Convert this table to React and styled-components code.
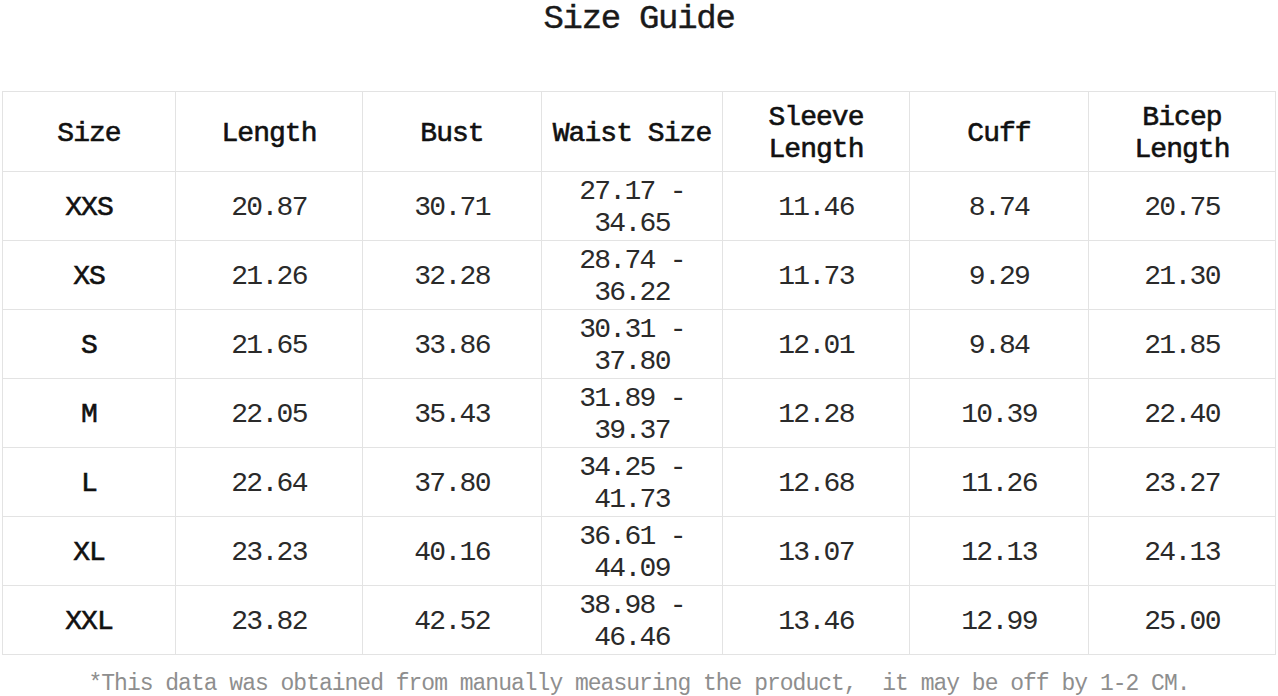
import React from 'react';
import styled, { createGlobalStyle } from 'styled-components';

const GlobalStyle = createGlobalStyle`
  html, body {
    margin: 0;
    padding: 0;
    background: #ffffff;
  }
  body {
    font-family: 'Liberation Mono', 'DejaVu Sans Mono', monospace;
    color: #1c1c1c;
  }
`;

const Page = styled.div`
  width: 1278px;
  height: 696px;
  overflow: hidden;
  display: flex;
  flex-direction: column;
  align-items: flex-start;
`;

const Title = styled.h1`
  align-self: stretch;
  margin: 0 0 55px;
  height: 36px;
  line-height: 38px;
  text-align: center;
  font-size: 34px;
  font-weight: 400;
  letter-spacing: -1.3px;
  color: #1a1a1a;
  -webkit-text-stroke: 0.4px #1a1a1a;
`;

const Grid = styled.div`
  margin-left: 2px;
  display: grid;
  grid-template-columns: 173px 187px 179px 181px 187px 179px 187px;
  grid-template-rows: 80px repeat(7, 69px);
  border-top: 1px solid #e3e3e3;
  border-left: 1px solid #e3e3e3;
`;

const Cell = styled.div`
  box-sizing: border-box;
  display: flex;
  align-items: center;
  justify-content: center;
  padding: 4px 4px 0;
  text-align: center;
  border-right: 1px solid #e3e3e3;
  border-bottom: 1px solid #e3e3e3;
  font-size: 28px;
  line-height: 32px;
  font-weight: 400;
  letter-spacing: ${p => (p.$strong ? '-0.95px' : '-1.7px')};
  color: ${p => (p.$strong ? '#111111' : '#2a2a2a')};
  -webkit-text-stroke: ${p => (p.$strong ? '0.6px #111111' : '0')};
`;

const Note = styled.p`
  align-self: stretch;
  margin: 15px 0 0;
  line-height: 28px;
  text-align: center;
  font-size: 23px;
  letter-spacing: -1px;
  color: #8e8e8e;
  white-space: pre;
`;

const headers = ['Size', 'Length', 'Bust', 'Waist Size', 'Sleeve Length', 'Cuff', 'Bicep Length'];

const rows = [
  ['XXS', '20.87', '30.71', '27.17 - 34.65', '11.46', '8.74', '20.75'],
  ['XS', '21.26', '32.28', '28.74 - 36.22', '11.73', '9.29', '21.30'],
  ['S', '21.65', '33.86', '30.31 - 37.80', '12.01', '9.84', '21.85'],
  ['M', '22.05', '35.43', '31.89 - 39.37', '12.28', '10.39', '22.40'],
  ['L', '22.64', '37.80', '34.25 - 41.73', '12.68', '11.26', '23.27'],
  ['XL', '23.23', '40.16', '36.61 - 44.09', '13.07', '12.13', '24.13'],
  ['XXL', '23.82', '42.52', '38.98 - 46.46', '13.46', '12.99', '25.00'],
];

export default function App() {
  return (
    <Page>
      <GlobalStyle />
      <Title>Size Guide</Title>
      <Grid>
        {headers.map(h => (
          <Cell key={h} $strong>
            {h}
          </Cell>
        ))}
        {rows.map(row =>
          row.map((v, i) => (
            <Cell key={row[0] + i} $strong={i === 0}>
              {v}
            </Cell>
          ))
        )}
      </Grid>
      <Note>*This data was obtained from manually measuring the product,  it may be off by 1-2 CM.</Note>
    </Page>
  );
}
